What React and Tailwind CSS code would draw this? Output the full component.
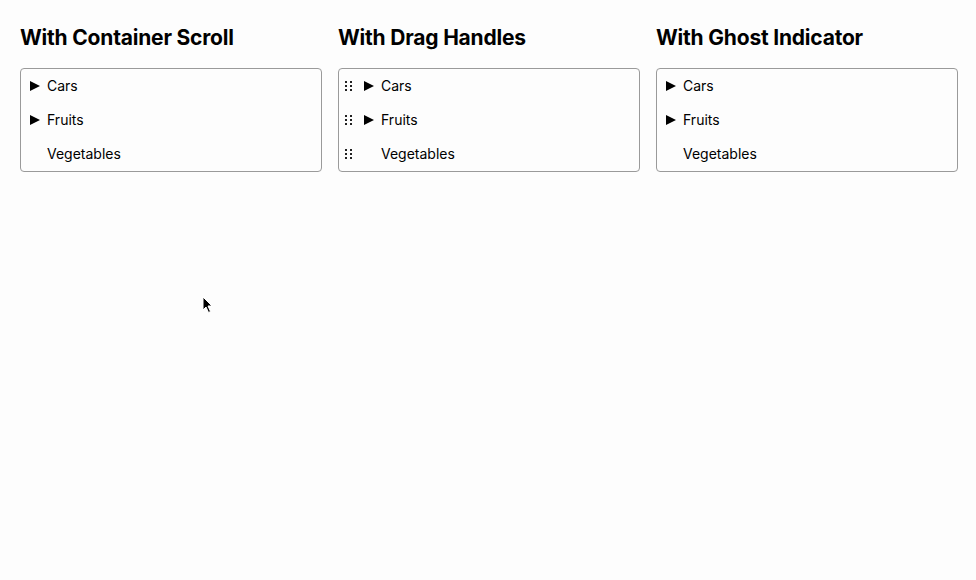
const items = [
    { name: 'Cars', hasChildren: true },
    { name: 'Fruits', hasChildren: true },
    { name: 'Vegetables', hasChildren: false },
];

function Caret() {
    return (
        <svg width="10" height="10" viewBox="0 0 10 10" className="shrink-0">
            <path d="M0 0 L10 5 L0 10 Z" fill="#000" />
        </svg>
    );
}

function Handle() {
    return (
        <svg width="7" height="10" viewBox="0 0 7 10" className="shrink-0">
            {[0, 4, 8].map((y) => (
                <g key={y}>
                    <rect x="0" y={y} width="2" height="2" fill="#222" />
                    <rect x="5" y={y} width="2" height="2" fill="#222" />
                </g>
            ))}
        </svg>
    );
}

function Tree({ title, handles }) {
    return (
        <div className="flex flex-col">
            <h2 className="text-[21px] leading-[28px] font-bold tracking-[-0.2px] mb-[16px]">{title}</h2>
            <div className="border border-[#9a9a9a] rounded-[4px]">
                {items.map((item) => (
                    <div key={item.name} className={`flex items-center h-[34px] ${handles ? 'pl-[6px]' : 'pl-[9px]'}`}>
                        {handles ? (
                            <div className="w-[19px] flex">
                                <Handle />
                            </div>
                        ) : null}
                        <div className="w-[17px] flex">
                            {item.hasChildren ? <Caret /> : null}
                        </div>
                        <span className="text-[14px] leading-[20px]">{item.name}</span>
                    </div>
                ))}
            </div>
        </div>
    );
}

export default function App() {
    return (
        <div className="relative w-[976px] h-[580px] bg-[#fdfdfd] text-black font-['Inter',sans-serif] pt-[24px] px-5 overflow-hidden">
            <div className="grid grid-cols-[302px_302px_302px] gap-4">
                <Tree title="With Container Scroll" />
                <Tree title="With Drag Handles" handles />
                <Tree title="With Ghost Indicator" />
            </div>
            {/* mouse cursor */}
            <svg className="absolute left-[202px] top-[296px]" width="12" height="18" viewBox="0 0 12 18">
                <path d="M1 1 L1 14 L4 11 L6.5 16.5 L8.5 15.5 L6 10 L10 10 Z" fill="#000" stroke="#fff" strokeWidth="1" />
            </svg>
        </div>
    );
}
